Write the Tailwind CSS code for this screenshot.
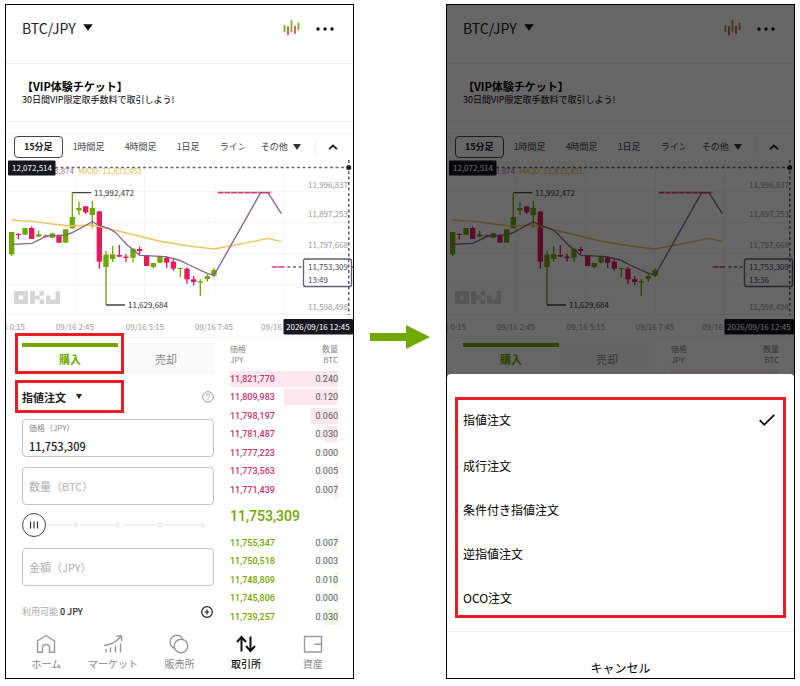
<!DOCTYPE html>
<html lang="ja">
<head>
    <meta charset="UTF-8">
    <meta name="viewport" content="width=device-width, initial-scale=1.0">
    <title>取引所 BTC/JPY</title>
    <script src="https://cdn.jsdelivr.net/npm/@tailwindcss/browser@4"></script>
</head>
<body class="bg-white font-['Noto_Sans_CJK_JP',sans-serif] text-[#222]">

    <!-- Header, banner and chart, used by both screens -->
    <template id="market-top">
        <header class="flex items-center justify-between pl-4 pr-[19px] pt-[11px] pb-[23px] border-b border-[#f0f0f0]">
            <button type="button" class="flex items-center gap-[7px] text-sm leading-6">
                BTC/JPY
                <svg class="w-[10px] h-[7px] mb-[2px]" viewBox="0 0 10 7"><path d="M0.2 0.3h9.600L5 6.700z" fill="#111"/></svg>
            </button>
            <div class="flex items-center gap-4">
                <button type="button" aria-label="チャート">
                    <svg class="block w-[17px] h-[18px]" viewBox="0 0 17 18" fill="none" stroke-width="1.9" stroke-linecap="round">
                        <path d="M1.500 7v5.500M8.500 2v10.500M15.500 4.500v6" stroke="#7cb518"/>
                        <path d="M5 8v7.500M12 7.500v6.500" stroke="#e0527f"/>
                    </svg>
                </button>
                <button type="button" aria-label="メニュー">
                    <svg class="block w-[18px] h-[18px]" viewBox="0 0 18 18" fill="#111"><circle cx="2" cy="10" r="1.7"/><circle cx="9" cy="10" r="1.7"/><circle cx="16" cy="10" r="1.7"/></svg>
                </button>
            </div>
        </header>
        <div class="px-4 pt-[15px] pb-[14px] border-b border-[#f0f0f0] text-black">
            <p class="text-[11px] leading-[14px] font-bold">【VIP体験チケット】</p>
            <p class="text-[9px] leading-[14px]">30日間VIP限定取手数料で取引しよう!</p>
        </div>
        <div class="mt-[11px] h-[27px] border-t border-[#f3f3f3] flex items-center pl-2 text-[9px] leading-3 text-[#444]">
            <button type="button" class="h-[22px] px-[9px] rounded border border-[#444] font-bold text-[#222]">15分足</button>
            <nav class="flex items-center gap-5 ml-[10px]">
                <button type="button">1時間足</button>
                <button type="button">4時間足</button>
                <button type="button">1日足</button>
                <button type="button" class="w-6 overflow-hidden whitespace-nowrap text-left">ライン</button>
            </nav>
            <button type="button" class="flex items-center gap-[5px] ml-[17px]">その他
                <svg class="w-2 h-[6px]" viewBox="0 0 8 6"><path d="M0 0h8L4 6z" fill="#333"/></svg>
            </button>
            <button type="button" class="ml-auto mr-[15px] h-4 pl-3 border-l border-[#eee]" aria-label="閉じる">
                <svg class="w-[10px] h-[6px]" viewBox="0 0 10 6" fill="none" stroke="#222" stroke-width="1.8"><path d="M1 5.2L5 1.5l4 3.7"/></svg>
            </button>
        </div>
        <svg class="block w-full border-b border-[#f5f5f5] text-[8px]" viewBox="6 160 347 177">
            <path d="M75.5 160v155M144.5 160v155M214.5 160v155M283.5 160v155M6 191.5h347M6 222.5h347M6 253.5h347M6 284.5h347M6 314.5h347" stroke="#f5f5f5"/>
            <!-- OKJ watermark -->
            <path fill="#d6d6d6" fill-rule="evenodd" d="M14 291h14v13H14zM19 295.5v4h4v-4zM30 291h5v4.5h4.5V291H44v4.5h-4.5v4H44v4.5h-4.5v-4.5H35v4.5h-5zM46 295.5h4.500v4h5V291h4.500v13H46z"/>
            <path d="M55 167.500H349" stroke="#6b6b75" stroke-width="1.300" stroke-dasharray="3 2.500"/>
            <text x="54" y="174" fill="#9a70a5">3,874</text>
            <text x="78" y="174" fill="#e6bd4a">MA30: 11,833,451</text>
            <g transform="translate(-1 180) scale(.33333)" fill="none" stroke-width="4">
                <g class="candles"></g>
                <path stroke="#edc45c" d="M38 120L100 124L160 132L215 138L280 135L345 150L480 183L570 198L645 207L730 191L807 175L847 185"/>
                <path stroke="#86648c" d="M38 193L98 190L145 168L200 165L220 158L280 125L303 138L330 145L350 158L385 195L410 215L422 226L500 230L540 240L570 255L625 280L645 286L785 38H807L847 101"/>
                <path stroke="#444" d="M220 38h57M321 375h57"/>
                <path stroke="#d93d79" stroke-width="5" stroke-dasharray="18 2" d="M656 38h161M818 261h38"/>
                <path stroke="#6b6b75" stroke-dasharray="9 8" d="M865 261h48"/>
            </g>
            <g fill="#333">
                <text x="94" y="195.500">11,992,472</text>
                <text x="128" y="308">11,629,684</text>
            </g>
            <g fill="#999" text-anchor="end">
                <text x="348" y="187.500">11,996,837</text>
                <text x="348" y="217">11,897,253</text>
                <text x="348" y="247.500">11,797,668</text>
                <text x="348" y="309.500">11,598,498</text>
                <text x="25" y="329.500">09/16 0:15</text>
                <text x="94" y="329.500">09/16 2:45</text>
                <text x="164" y="329.500">09/16 5:15</text>
                <text x="233" y="329.500">09/16 7:45</text>
                <text x="282" y="329.500">09/16</text>
            </g>
            <rect x="303.500" y="259" width="48" height="27.500" rx="2" fill="#fff" stroke="#5c6173" stroke-width="1.300"/>
            <g fill="#444a5c">
                <text x="308" y="270">11,753,309</text>
                <text x="308" y="282.500" class="countdown"></text>
            </g>
            <path d="M348.800 160v155M352 267h1" stroke="#454556" stroke-width="1.300" stroke-dasharray="3 2.500" fill="none"/>
            <circle cx="348.700" cy="167.500" r="2.500" fill="#20202c"/>
            <rect x="8" y="160.500" width="47.500" height="15" rx="1" fill="#16161f"/>
            <rect x="283.500" y="319" width="69.500" height="15.500" rx="1" fill="#16161f"/>
            <g fill="#fff">
                <text x="12" y="171">12,072,514</text>
                <text x="286" y="329.500">2026/09/16 12:45</text>
            </g>
        </svg>
    </template>

    <main class="grid grid-cols-[1fr_92px_1fr] px-[5px] pt-1 pb-[7px]">

        <!-- Order screen -->
        <section class="border border-black overflow-hidden">
            <div data-market="13:49"></div>
            <div class="grid grid-cols-[16fr_9fr] gap-4 pl-4 pr-[15px] pt-[5px]">
                <div>
                    <div class="grid grid-cols-2 h-[31px] text-[11px] leading-4">
                        <button type="button" class="relative pb-1 border-t-4 border-[#70a800] font-bold text-[#70a800]">購入
                            <span class="absolute -top-[14px] bottom-0 -left-[7px] -right-[6px] border-[3px] border-[#ed1c24] pointer-events-none"></span>
                        </button>
                        <button type="button" class="bg-[#fafafa] text-[#888]">売却</button>
                    </div>
                    <div class="relative flex items-center h-[45px]">
                        <select aria-label="注文方法" class="appearance-none field-sizing-content text-[11px] leading-4 font-bold">
                            <option>指値注文</option>
                            <option>成行注文</option>
                            <option>条件付き指値注文</option>
                            <option>逆指値注文</option>
                            <option>OCO注文</option>
                        </select>
                        <svg class="w-[6px] h-[5px] ml-[10px]" viewBox="0 0 6 5"><path d="M0 0h6L3 5z" fill="#222"/></svg>
                        <button type="button" class="ml-auto" aria-label="ヘルプ">
                            <svg class="size-3" viewBox="0 0 12 12" fill="none" stroke="#999"><circle cx="6" cy="6" r="5.300"/><path d="M4.400 4.800C4.400 2.700 7.600 2.700 7.600 4.700C7.600 5.900 6 5.900 6 7.300M6 8.300v1"/></svg>
                        </button>
                        <span class="absolute inset-y-[6px] -left-[7px] w-[109px] border-[3px] border-[#ed1c24] pointer-events-none"></span>
                    </div>
                    <form>
                        <div class="h-[38px] px-[6px] pt-[2px] rounded border border-[#c4c4c4]">
                            <label for="price" class="block text-[8px] leading-3 text-[#888]">価格（JPY）</label>
                            <input id="price" type="text" value="11,753,309" class="block w-full mt-1 text-[11px] leading-4 font-medium outline-none">
                        </div>
                        <input type="text" aria-label="数量（BTC）" placeholder="数量（BTC）" class="block w-full h-[38px] mt-[10px] px-[6px] rounded border border-[#c4c4c4] text-[11px] leading-4 placeholder:text-[#b0b0b0] outline-none">
                        <div class="relative h-6 mt-2">
                            <svg class="absolute inset-0 w-full h-6" viewBox="0 0 192 24" fill="#f0f0f0"><path d="M24 11h26v2H24zM58 11h34v2H58zM100 11h34v2h-34zM142 11h35v2h-35z"/><circle cx="53.500" cy="12" r="2.800"/><circle cx="95.500" cy="12" r="2.800"/><circle cx="138" cy="12" r="2.800"/><circle cx="180.500" cy="12" r="2.800"/></svg>
                            <input type="range" aria-label="数量の割合" min="0" max="100" value="0" class="relative block w-full h-6 appearance-none bg-transparent [&::-webkit-slider-thumb]:appearance-none [&::-webkit-slider-thumb]:size-6 [&::-webkit-slider-thumb]:rounded-full [&::-webkit-slider-thumb]:border [&::-webkit-slider-thumb]:border-[#444] [&::-webkit-slider-thumb]:bg-white">
                            <svg class="absolute left-0 top-0 size-6 pointer-events-none" viewBox="0 0 24 24" stroke="#333" stroke-width="1.200"><path d="M8.500 8.500v7M12 8.500v7M15.500 8.500v7"/></svg>
                        </div>
                        <input type="text" aria-label="金額（JPY）" placeholder="金額（JPY）" class="block w-full h-[38px] mt-[11px] px-[6px] rounded border border-[#c4c4c4] text-[11px] leading-4 placeholder:text-[#b0b0b0] outline-none">
                    </form>
                    <div class="flex items-center justify-between pt-5 text-[9px] leading-3">
                        <p class="text-[#aaa]">利用可能 <span class="text-[#222] font-medium">0 JPY</span></p>
                        <button type="button" aria-label="入金">
                            <svg class="block w-[14px] h-3" viewBox="0 0 14 12" fill="none" stroke="#222" stroke-width="1.200"><circle cx="7" cy="6" r="5.300"/><path d="M4.500 6h5M7 3.500v5"/></svg>
                        </button>
                    </div>
                </div>

                <table class="w-full self-start font-['Roboto',sans-serif] text-[9px] leading-4">
                    <thead>
                        <tr class="h-[26px] align-top text-[8px] leading-[11px] text-[#888] font-['Noto_Sans_CJK_JP',sans-serif]">
                            <th class="p-0 text-left font-normal">価格<br>JPY</th>
                            <th class="p-0 text-right font-normal">数量<br>BTC</th>
                        </tr>
                    </thead>
                    <tbody id="asks"></tbody>
                    <tbody>
                        <tr class="h-[34px]"><td colspan="2" class="p-0 text-sm leading-5 font-medium text-[#70a800]">11,753,309</td></tr>
                    </tbody>
                    <tbody id="bids"></tbody>
                </table>
            </div>

            <nav class="grid grid-cols-5 px-[7px] pt-2 pb-2 text-[10px] leading-3 text-[#888]">
                <a href="#" class="flex flex-col items-center gap-1">
                    <svg class="size-5" viewBox="0 0 20 20" fill="none" stroke="#999" stroke-width="1.400"><path d="M1.500 18.300V7L10 1.500L18.500 7v11.300h-5V13.500C13.500 11 12 10.500 10 10.500S6.500 11 6.500 13.500v4.800z"/></svg>
                    ホーム
                </a>
                <a href="#" class="flex flex-col items-center gap-1">
                    <svg class="size-5" viewBox="0 0 20 20" fill="none" stroke="#999" stroke-width="1.400"><path d="M1 11.500C8 11 13 8 18 2.500M13.500 2h5v5M3 15v3.500M7.500 13.500v5M12.500 11.500v7M17.500 9.500v9"/></svg>
                    マーケット
                </a>
                <a href="#" class="flex flex-col items-center gap-1">
                    <svg class="size-5" viewBox="0 0 20 20" fill="none" stroke="#999" stroke-width="1.400"><circle cx="7.800" cy="8" r="6.800"/><circle cx="12" cy="12" r="6.800" fill="#fff"/></svg>
                    販売所
                </a>
                <a href="#" class="flex flex-col items-center gap-1 text-[#111] font-medium">
                    <svg class="size-5" viewBox="0 0 20 20" fill="none" stroke="#111" stroke-width="2"><path d="M5.500 17.500V3.500M1 8L5.500 3L10 8M14.500 2.500v14M10 12l4.500 5l4.500-5"/></svg>
                    取引所
                </a>
                <a href="#" class="flex flex-col items-center gap-1">
                    <svg class="size-5" viewBox="0 0 20 20" fill="none" stroke="#999" stroke-width="1.400"><path d="M1.500 2.500h17v15.500h-17zM18.500 10.200H11.500"/></svg>
                    資産
                </a>
            </nav>
        </section>

        <div class="flex items-center justify-center pb-[9px]">
            <svg class="w-[60px] h-[26px]" viewBox="0 0 60 26"><path d="M0 9h36V1l24 12L36 25v-8H0z" fill="#70a800"/></svg>
        </div>

        <!-- Order type sheet -->
        <section class="flex flex-col border border-black overflow-hidden">
            <div class="relative">
                <div data-market="13:36"></div>
                <div class="grid grid-cols-[16fr_9fr] gap-4 pl-4 pr-[15px] pt-[5px]">
                    <div class="grid grid-cols-2 h-[31px] text-[11px] leading-4">
                        <button type="button" class="pb-1 border-t-4 border-[#70a800] font-bold text-[#70a800]">購入</button>
                        <button type="button" class="bg-[#fafafa] text-[#888]">売却</button>
                    </div>
                    <div>
                        <div class="flex justify-between text-[8px] leading-[11px] text-[#888]">
                            <p>価格<br>JPY</p>
                            <p class="text-right">数量<br>BTC</p>
                        </div>
                        <div class="mt-[5px] h-2 bg-[#fde7ef]"></div>
                    </div>
                </div>
                <div class="absolute inset-0 bg-black/60"></div>
            </div>
            <div class="relative -mt-1 grow bg-white rounded-t text-xs text-black">
                <div class="relative pt-[22px] text-left">
                    <button type="button" class="flex items-center justify-between w-full h-12 pl-4 pr-[19px]">指値注文
                        <svg class="w-4 h-3" viewBox="0 0 16 12" fill="none" stroke="#111" stroke-width="1.800"><path d="M0.700 6.200L5.300 10.700L15.300 0.800"/></svg>
                    </button>
                    <button type="button" class="flex items-center w-full h-11 px-4">成行注文</button>
                    <button type="button" class="flex items-center w-full h-11 px-4">条件付き指値注文</button>
                    <button type="button" class="flex items-center w-full h-11 px-4">逆指値注文</button>
                    <button type="button" class="flex items-center w-full h-11 px-4">OCO注文</button>
                    <span class="absolute inset-x-2 top-[23px] bottom-[2px] border-[3px] border-[#ed1c24] pointer-events-none"></span>
                </div>
                <button type="button" class="block w-full mt-[11px] pt-[26px] leading-5 border-t border-[#f0f0f0]">キャンセル</button>
            </div>
        </section>
    </main>

    <script>
        // [x, open/close top, open/close bottom, high, low, up]
        const candles = [
            [38, 156, 223, 156, 228, 1], [58, 162, 165, 160, 178, 0], [78, 144, 164, 144, 164, 1],
            [98, 144, 177, 140, 177, 0], [119, 163, 170, 152, 170, 1], [140, 167, 170, 164, 172, 0],
            [160, 160, 173, 158, 175, 1], [180, 167, 188, 167, 188, 0], [200, 148, 188, 148, 188, 1],
            [220, 111, 145, 38, 145, 1], [240, 84, 91, 65, 105, 1], [260, 79, 97, 79, 102, 0],
            [280, 84, 105, 63, 143, 1], [301, 94, 245, 94, 266, 0], [321, 224, 261, 212, 374, 1],
            [341, 223, 237, 198, 246, 1], [361, 225, 230, 195, 230, 0], [381, 230, 234, 222, 245, 0],
            [402, 206, 233, 206, 247, 1], [422, 207, 213, 200, 222, 0], [443, 225, 258, 225, 258, 0],
            [463, 249, 261, 249, 265, 1], [483, 230, 248, 227, 250, 1], [503, 233, 248, 230, 264, 0],
            [523, 245, 266, 238, 272, 0], [544, 264, 267, 264, 292, 1], [564, 266, 298, 262, 311, 0],
            [584, 298, 306, 288, 316, 0], [604, 304, 308, 298, 347, 1], [625, 288, 297, 283, 305, 1],
            [645, 270, 287, 265, 291, 1]
        ];

        document.querySelectorAll('[data-market]').forEach(function (slot) {
            slot.appendChild(document.getElementById('market-top').content.cloneNode(true));
            slot.querySelector('.countdown').textContent = slot.dataset.market;
            slot.querySelector('.candles').innerHTML = candles.map(([x, top, bottom, high, low, up]) => {
                const color = up ? '#70a800' : '#e5195f';
                return `<path d="M${x} ${high}V${low}" stroke="${color}"/>
                        <rect x="${x - 8}" y="${top}" width="16" height="${bottom - top}" fill="${color}"/>`;
            }).join('');
        });

        const asks = [
            ['11,821,770', '0.240'], ['11,809,983', '0.120'], ['11,798,197', '0.060'], ['11,781,487', '0.030'],
            ['11,777,223', '0.000'], ['11,773,563', '0.005'], ['11,771,439', '0.007']
        ];
        const bids = [
            ['11,755,347', '0.007'], ['11,750,518', '0.003'], ['11,748,809', '0.010'],
            ['11,745,806', '0.000'], ['11,739,257', '0.030']
        ];

        function renderBook(id, rows, textClass, barColor) {
            document.getElementById(id).innerHTML = rows.map(([price, qty]) => {
                const depth = qty / 0.24 * 100;
                return `<tr class="odd:h-[19px] even:h-[18px] bg-[length:100%_16px] bg-center bg-no-repeat" style="background-image: linear-gradient(to left, ${barColor} ${depth}%, transparent ${depth}%)">
                    <td class="p-0 font-medium ${textClass}">${price}</td>
                    <td class="p-0 text-right text-[#555]">${qty}</td>
                </tr>`;
            }).join('');
        }
        renderBook('asks', asks, 'text-[#c9346f]', '#fde7ef');
        renderBook('bids', bids, 'text-[#70a800]', '#f0f7e0');
    </script>
</body>
</html>
